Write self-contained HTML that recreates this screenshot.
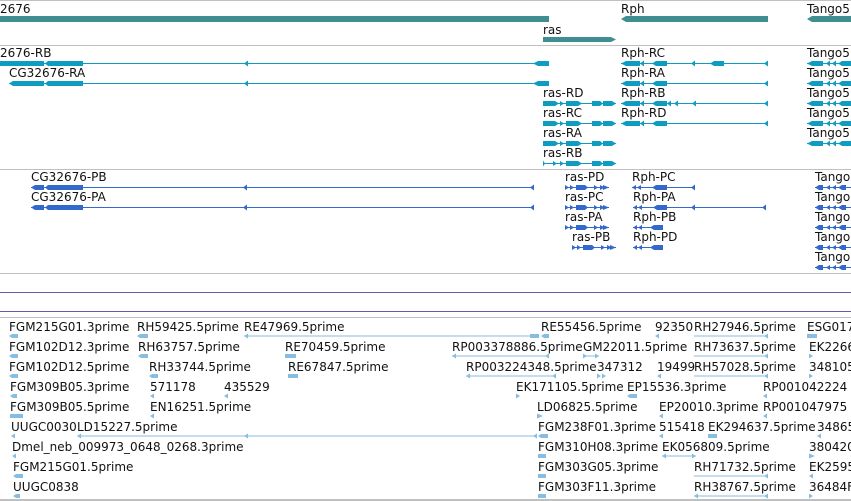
<!DOCTYPE html>
<html><head><meta charset="utf-8"><style>
html,body{margin:0;padding:0;background:#fff;overflow:hidden}
svg{display:block}
text{font-family:"DejaVu Sans","Liberation Sans",sans-serif;font-size:12px;fill:#111}
</style></head><body>
<svg width="851" height="501" viewBox="0 0 851 501" xmlns="http://www.w3.org/2000/svg">
<g fill="#c0c0c0">
<rect x="0" y="0" width="851" height="1"/>
<rect x="0" y="45" width="851" height="1"/>
<rect x="0" y="169" width="851" height="1"/>
<rect x="0" y="273" width="851" height="1"/>
<rect x="0" y="317" width="851" height="1"/>
<rect x="0" y="499" width="851" height="2"/>
</g>
<g fill="#6a57a8"><rect x="0" y="292" width="851" height="1"/><rect x="0" y="311" width="851" height="1"/></g>

<g fill="#3f8f90">
<rect x="0" y="16" width="549" height="6"/>
<polygon points="621,19 626,16 768,16 768,22 626,22"/>
<polygon points="807,19 812,16 851,16 851,22 812,22"/>
<polygon points="543,37 611,37 616,39.5 611,42 543,42"/>
</g>
<text x="0" y="13">2676</text><text x="621" y="13">Rph</text><text x="807" y="13">Tango5</text>
<text x="543" y="34">ras</text>

<g fill="#0e9dc0" stroke="none">
<text x="0" y="57" style="fill:#111">2676-RB</text>
<text x="9" y="77" style="fill:#111">CG32676-RA</text>
<rect x="0" y="63" width="549" height="1"/><rect x="0" y="61" width="44" height="5"/><polygon points="45,63.5 48,61 83,61 83,66 48,66"/><polygon points="244,63.5 248,60.5 248,66.5"/><polygon points="533,63.5 538,61 549,61 549,66 538,66"/>
<rect x="9" y="83" width="540" height="1"/><polygon points="9,83.5 13,81 44,81 44,86 13,86"/><polygon points="45,83.5 48,81 83,81 83,86 48,86"/><polygon points="244,83.5 248,80.5 248,86.5"/><polygon points="533,83.5 538,81 549,81 549,86 538,86"/>

<text x="621" y="57" style="fill:#111">Rph-RC</text><text x="621" y="77" style="fill:#111">Rph-RA</text><text x="621" y="97" style="fill:#111">Rph-RB</text><text x="621" y="117" style="fill:#111">Rph-RD</text>
<rect x="621" y="63" width="147" height="1"/><polygon points="621,63.5 626,61 640,61 640,66 626,66"/><polygon points="640,63.5 644,60.5 644,66.5"/><polygon points="652,63.5 656,61 667,61 667,66 656,66"/><polygon points="691,63.5 695,60.5 695,66.5"/><polygon points="710,63.5 714,61 724,61 724,66 714,66"/><polygon points="764,63.5 768,60.5 768,66.5"/>
<rect x="621" y="83" width="147" height="1"/><polygon points="621,83.5 626,81 640,81 640,86 626,86"/><polygon points="640,83.5 644,80.5 644,86.5"/><polygon points="652,83.5 656,81 667,81 667,86 656,86"/><polygon points="764,83.5 768,80.5 768,86.5"/>
<rect x="621" y="103" width="147" height="1"/><polygon points="621,103.5 626,101 640,101 640,106 626,106"/><polygon points="640,103.5 644,100.5 644,106.5"/><polygon points="652,103.5 656,101 667,101 667,106 656,106"/><polygon points="667,103.5 671,100.5 671,106.5"/><polygon points="674,103.5 678,100.5 678,106.5"/><polygon points="692,103.5 696,100.5 696,106.5"/><polygon points="764,103.5 768,100.5 768,106.5"/>
<rect x="621" y="123" width="147" height="1"/><polygon points="621,123.5 626,121 640,121 640,126 626,126"/><polygon points="640,123.5 644,120.5 644,126.5"/><polygon points="652,123.5 656,121 667,121 667,126 656,126"/><polygon points="764,123.5 768,120.5 768,126.5"/>

<text x="543" y="97" style="fill:#111">ras-RD</text><text x="543" y="117" style="fill:#111">ras-RC</text><text x="543" y="137" style="fill:#111">ras-RA</text><text x="543" y="157" style="fill:#111">ras-RB</text>
<g id="ras">
<rect x="543" y="103" width="73" height="1"/><polygon points="543,101 555,101 559,103.5 555,106 543,106"/><polygon points="560,101 564,103.5 560,106"/><polygon points="566,101 578,101 582,103.5 578,106 566,106"/><polygon points="592,101 600,101 603,103.5 600,106 592,106"/><polygon points="603,101 612,101 616,103.5 612,106 603,106"/>
</g>
<use href="#ras" y="20"/><use href="#ras" y="40"/>
<rect x="543" y="163" width="73" height="1"/><polygon points="543,160.5 545,163.5 543,166.5"/><polygon points="553,161 557,163.5 553,166"/><polygon points="560,161 564,163.5 560,166"/><polygon points="566,161 578,161 582,163.5 578,166 566,166"/><polygon points="592,161 600,161 603,163.5 600,166 592,166"/><polygon points="603,161 612,161 616,163.5 612,166 603,166"/>

<g id="tg">
<polygon points="807,63.5 812,61 823,61 823,66 812,66"/><rect x="807" y="63" width="44" height="1"/><polygon points="826,63.5 830,60.5 830,66.5"/><polygon points="832,63.5 836,60.5 836,66.5"/><polygon points="838,63.5 842,61 851,61 851,66 842,66"/>
</g>
<use href="#tg" y="20"/><use href="#tg" y="40"/><use href="#tg" y="60"/><use href="#tg" y="80"/>
<text x="807" y="57" style="fill:#111">Tango5</text><text x="807" y="77" style="fill:#111">Tango5</text><text x="807" y="97" style="fill:#111">Tango5</text><text x="807" y="117" style="fill:#111">Tango5</text><text x="807" y="137" style="fill:#111">Tango5</text>
</g>

<g fill="#3368cc">
<text x="31" y="181" style="fill:#111">CG32676-PB</text><text x="31" y="201" style="fill:#111">CG32676-PA</text>
<g id="cgp"><rect x="31" y="187" width="503" height="1"/><polygon points="31,187.5 35,185 44,185 44,190 35,190"/><polygon points="45,187.5 48,185 83,185 83,190 48,190"/><polygon points="243,187.5 247,184.5 247,190.5"/><polygon points="530,187.5 534,184.5 534,190.5"/></g>
<use href="#cgp" y="20"/>
<text x="565" y="181" style="fill:#111">ras-PD</text><text x="565" y="201" style="fill:#111">ras-PC</text><text x="565" y="221" style="fill:#111">ras-PA</text><text x="572" y="241" style="fill:#111">ras-PB</text>
<g id="rp"><rect x="565" y="187" width="44" height="1"/><polygon points="565,185 569,187.5 565,190"/><polygon points="570,185 574,187.5 570,190"/><polygon points="576,185 585,185 588,187.5 585,190 576,190"/><polygon points="594,185 598,187.5 594,190"/><polygon points="600,185 605,187.5 600,190"/><polygon points="603,185 609,187.5 603,190"/></g>
<use href="#rp" y="20"/><use href="#rp" y="40"/><use href="#rp" x="7" y="60"/>
<text x="632" y="181" style="fill:#111">Rph-PC</text><text x="633" y="201" style="fill:#111">Rph-PA</text><text x="633" y="221" style="fill:#111">Rph-PB</text><text x="633" y="241" style="fill:#111">Rph-PD</text>
<rect x="632" y="187" width="63" height="1"/><polygon points="632,187.5 636,185 636,190"/><polygon points="637,187.5 641,185 641,190"/><polygon points="652,187.5 656,185 667,185 667,190 656,190"/><polygon points="691,187.5 695,184.5 695,190.5"/>
<rect x="633" y="207" width="133" height="1"/><polygon points="633,207.5 637,205 637,210"/><polygon points="638,207.5 642,205 642,210"/><polygon points="653,207.5 657,205 667,205 667,210 657,210"/><polygon points="691,207.5 695,204.5 695,210.5"/><polygon points="762,207.5 766,204.5 766,210.5"/>
<rect x="633" y="227" width="30" height="1"/><polygon points="633,227.5 637,225 637,230"/><polygon points="638,227.5 642,225 642,230"/><polygon points="650,227.5 654,225 663,225 663,230 654,230"/>
<rect x="633" y="247" width="30" height="1"/><polygon points="633,247.5 637,245 637,250"/><polygon points="638,247.5 642,245 642,250"/><polygon points="650,247.5 654,245 663,245 663,250 654,250"/>
<g id="tp"><rect x="815" y="187" width="36" height="1"/><polygon points="815,187.5 819,185 823,185 823,190 819,190"/><polygon points="826,187.5 830,185 830,190"/><polygon points="832,187.5 836,185 836,190"/><polygon points="838,187.5 842,185 846,185 846,190 842,190"/></g>
<use href="#tp" y="20"/><use href="#tp" y="40"/><use href="#tp" y="60"/><use href="#tp" y="80"/>
<text x="815" y="181" style="fill:#111">Tango</text><text x="815" y="201" style="fill:#111">Tango</text><text x="815" y="221" style="fill:#111">Tango</text><text x="815" y="241" style="fill:#111">Tango</text><text x="815" y="261" style="fill:#111">Tango</text>
</g>

<g>
<text x="9" y="331">FGM215G01.3prime</text><text x="137" y="331">RH59425.5prime</text><text x="244" y="331">RE47969.5prime</text><text x="541" y="331">RE55456.5prime</text><text x="655" y="331">92350</text><text x="694" y="331">RH27946.5prime</text><text x="807" y="331">ESG017</text>
<text x="9" y="351">FGM102D12.3prime</text><text x="138" y="351">RH63757.5prime</text><text x="285" y="351">RE70459.5prime</text><text x="452" y="351">RP003378886.5prime</text><text x="583" y="351">GM22011.5prime</text><text x="694" y="351">RH73637.5prime</text><text x="809" y="351">EK2266</text>
<text x="9" y="371">FGM102D12.5prime</text><text x="149" y="371">RH33744.5prime</text><text x="288" y="371">RE67847.5prime</text><text x="466" y="371">RP003224348.5prime</text><text x="597" y="371">347312</text><text x="657" y="371">19499</text><text x="694" y="371">RH57028.5prime</text><text x="809" y="371">348105</text>
<text x="10" y="391">FGM309B05.3prime</text><text x="150" y="391">571178</text><text x="224" y="391">435529</text><text x="516" y="391">EK171105.5prime</text><text x="627" y="391">EP15536.3prime</text><text x="763" y="391">RP001042224</text>
<text x="10" y="411">FGM309B05.5prime</text><text x="150" y="411">EN16251.5prime</text><text x="537" y="411">LD06825.5prime</text><text x="659" y="411">EP20010.3prime</text><text x="763" y="411">RP001047975</text>
<text x="11" y="431">UUGC0030</text><text x="77" y="431">LD15227.5prime</text><text x="538" y="431">FGM238F01.3prime</text><text x="659" y="431">515418</text><text x="708" y="431">EK294637.5prime</text><text x="817" y="431">348659</text>
<text x="12" y="451">Dmel_neb_009973_0648_0268.3prime</text><text x="538" y="451">FGM310H08.3prime</text><text x="662" y="451">EK056809.5prime</text><text x="809" y="451">380420</text>
<text x="13" y="471">FGM215G01.5prime</text><text x="538" y="471">FGM303G05.3prime</text><text x="694" y="471">RH71732.5prime</text><text x="809" y="471">EK2595</text>
<text x="13" y="491">UUGC0838</text><text x="538" y="491">FGM303F11.3prime</text><text x="694" y="491">RH38767.5prime</text><text x="809" y="491">36484F</text>
</g>
<g fill="#86bde0">
<polygon points="9,336 12,334 18,334 18,338 12,338"/><polygon points="137,336 140,334 148,334 148,338 140,338"/>
<rect x="244" y="335.5" width="286" height="1"/><polygon points="244,336 248,333.5 248,338.5"/><polygon points="530,334 539,334 539,338 530,338"/><polygon points="541,336 544,334 549,334 549,338 544,338"/>
<polygon points="655,336 659,333.5 659,338.5"/><rect x="694" y="335.5" width="72" height="1"/><polygon points="764,336 768,333.5 768,338.5"/><polygon points="807,334 817,334 817,338 807,338"/>
<polygon points="9,356 12,354 18,354 18,358 12,358"/><polygon points="138,356 141,354 148,354 148,358 141,358"/><polygon points="285,354 296,354 296,358 285,358"/>
<rect x="452" y="355.5" width="96" height="1"/><polygon points="452,356 456,353.5 456,358.5"/><polygon points="545,356 549,353.5 549,358.5"/><rect x="583" y="355.5" width="16" height="1"/><polygon points="583,353.5 587,356 583,358.5"/><polygon points="595,353.5 599,356 595,358.5"/><rect x="694" y="355.5" width="72" height="1"/><polygon points="764,356 768,353.5 768,358.5"/><polygon points="809,353.5 813,356 809,358.5"/>
<polygon points="9,376 12,374 18,374 18,378 12,378"/><polygon points="149,376 152,374 158,374 158,378 152,378"/><polygon points="288,374 298,374 298,378 288,378"/>
<rect x="466" y="375.5" width="89" height="1"/><polygon points="466,376 470,373.5 470,378.5"/><polygon points="552,376 556,373.5 556,378.5"/><polygon points="597,373.5 601,376 597,378.5"/><polygon points="602,373.5 606,376 602,378.5"/><polygon points="657,376 661,373.5 661,378.5"/><rect x="694" y="375.5" width="72" height="1"/><polygon points="764,376 768,373.5 768,378.5"/><polygon points="809,373.5 813,376 809,378.5"/>
<polygon points="10,396 13,394 17,394 17,398 13,398"/><polygon points="150,396 154,393.5 154,398.5"/><polygon points="224,396 228,393.5 228,398.5"/><polygon points="516,393.5 520,396 516,398.5"/><polygon points="627,396 630,394 637,394 637,398 630,398"/><polygon points="763,396 767,393.5 767,398.5"/>
<polygon points="10,414 23,414 23,418 10,418"/><polygon points="150,416 154,413.5 154,418.5"/><polygon points="537,413.5 543,416 537,418.5"/><polygon points="659,416 663,413.5 663,418.5"/><polygon points="763,416 767,413.5 767,418.5"/>
<polygon points="11,436 15,433.5 15,438.5"/><rect x="77" y="435.5" width="460" height="1"/><polygon points="77,436 81,433.5 81,438.5"/><polygon points="244,436 248,433.5 248,438.5"/><polygon points="533,436 537,433.5 537,438.5"/><polygon points="538,436 541,434 548,434 548,438 541,438"/><polygon points="659,436 663,433.5 663,438.5"/><polygon points="708,434 717,434 717,438 708,438"/><polygon points="817,436 821,433.5 821,438.5"/>
<polygon points="12,456 16,453.5 16,458.5"/><polygon points="538,454 546,454 546,458 538,458"/><rect x="662" y="455.5" width="34" height="1"/><polygon points="662,456 666,453.5 666,458.5"/><polygon points="692,453.5 696,456 692,458.5"/><polygon points="809,453.5 815,456 809,458.5"/>
<polygon points="13,476 16,474 23,474 23,478 16,478"/><polygon points="538,474 546,474 546,478 538,478"/><rect x="694" y="475.5" width="72" height="1"/><polygon points="764,476 768,473.5 768,478.5"/><polygon points="809,476 813,473.5 813,478.5"/>
<polygon points="13,496 16,494 20,494 20,498 16,498"/><polygon points="538,494 546,494 546,498 538,498"/><rect x="694" y="495.5" width="72" height="1"/><polygon points="694,496 698,493.5 698,498.5"/><polygon points="764,496 768,493.5 768,498.5"/><polygon points="809,493.5 813,496 809,498.5"/>
</g>
</svg>
</body></html>
